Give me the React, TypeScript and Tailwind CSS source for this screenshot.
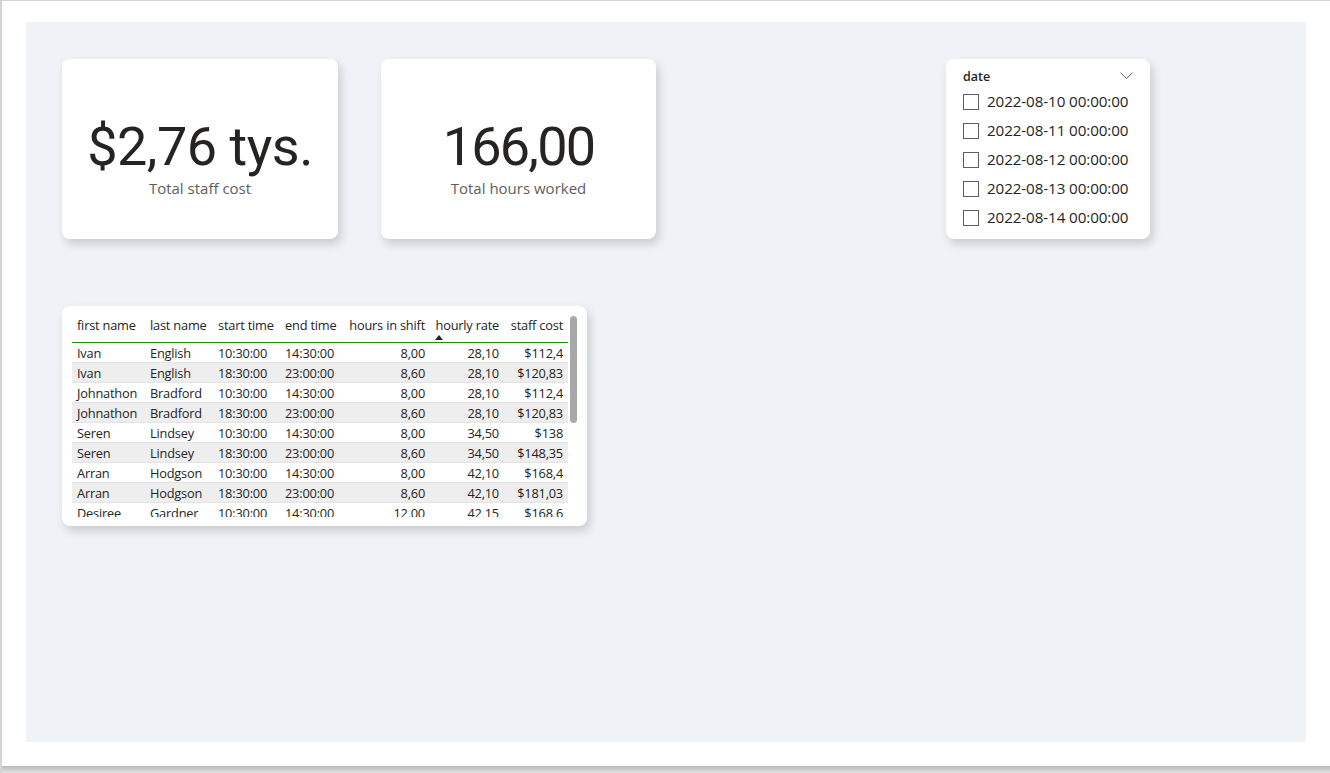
import React from "react";

const rows = [
  ["Ivan", "English", "10:30:00", "14:30:00", "8,00", "28,10", "$112,4"],
  ["Ivan", "English", "18:30:00", "23:00:00", "8,60", "28,10", "$120,83"],
  ["Johnathon", "Bradford", "10:30:00", "14:30:00", "8,00", "28,10", "$112,4"],
  ["Johnathon", "Bradford", "18:30:00", "23:00:00", "8,60", "28,10", "$120,83"],
  ["Seren", "Lindsey", "10:30:00", "14:30:00", "8,00", "34,50", "$138"],
  ["Seren", "Lindsey", "18:30:00", "23:00:00", "8,60", "34,50", "$148,35"],
  ["Arran", "Hodgson", "10:30:00", "14:30:00", "8,00", "42,10", "$168,4"],
  ["Arran", "Hodgson", "18:30:00", "23:00:00", "8,60", "42,10", "$181,03"],
  ["Desiree", "Gardner", "10:30:00", "14:30:00", "12,00", "42,15", "$168,6"],
];

const cols = [
  { name: "first name", w: "w-[73px]", right: false },
  { name: "last name", w: "w-[68px]", right: false },
  { name: "start time", w: "w-[67px]", right: false },
  { name: "end time", w: "w-[63px]", right: false },
  { name: "hours in shift", w: "w-[87px]", right: true },
  { name: "hourly rate", w: "w-[74px]", right: true },
  { name: "staff cost", w: "w-[64px]", right: true },
];

const dates = [
  "2022-08-10 00:00:00",
  "2022-08-11 00:00:00",
  "2022-08-12 00:00:00",
  "2022-08-13 00:00:00",
  "2022-08-14 00:00:00",
];

function Card({ value, label, w, tight }: { value: string; label: string; w: string; tight?: boolean }) {
  return (
    <div className={`${w} h-[180px] bg-white rounded-[8px] shadow-[3px_5px_10px_rgba(0,0,0,0.16)] flex flex-col items-center pt-[58px]`}>
      <div
        className={`text-[#252423] text-[54px] leading-[60px] ${tight ? "tracking-[-1.8px]" : "tracking-[-0.5px]"}`}
        style={{ fontFamily: "Roboto, sans-serif" }}
      >
        {value}
      </div>
      <div className="text-[#605E5C] text-[15px] leading-[20px] mt-[1px]">{label}</div>
    </div>
  );
}

export default function App() {
  return (
    <div
      className="w-[1330px] h-[773px] bg-[#d4d4d4] pl-[2px] pt-[1px] flex flex-col overflow-hidden"
      style={{ fontFamily: "'Open Sans', 'Noto Sans', sans-serif" }}
    >
      <div className="w-[1328px] h-[765px] bg-white pl-[24px] pt-[21px]">
        <div className="w-[1280px] h-[720px] bg-[#eff2f7] pl-[36px] pt-[37px]">
          <div className="flex">
            <Card w="w-[276px]" value="$2,76 tys." label="Total staff cost" />
            <div className="w-[43px]" />
            <Card w="w-[275px]" value="166,00" label="Total hours worked" tight />
            <div className="w-[290px]" />
            <div className="w-[204px] h-[180px] bg-white rounded-[8px] shadow-[3px_5px_10px_rgba(0,0,0,0.16)] pl-[17px] pr-[16px] pt-[9px]">
              <div className="flex items-center justify-between h-[18px]">
                <span className="text-[12.5px] font-semibold text-[#252423]">date</span>
                <svg width="13" height="8" viewBox="0 0 13 8" className="mr-[1px] mb-[2px]">
                  <path d="M0.5 0.8 L6.5 6.5 L12.5 0.8" fill="none" stroke="#605E5C" strokeWidth="1" />
                </svg>
              </div>
              <div className="flex flex-col mt-[1px]">
                {dates.map((d) => (
                  <div key={d} className="flex items-center h-[29px]">
                    <div className="w-[16px] h-[16px] border border-[#605E5C] bg-white" />
                    <span className="ml-[8px] text-[15.2px] text-[#252423] tracking-[-0.1px]">{d}</span>
                  </div>
                ))}
              </div>
            </div>
          </div>
          <div className="mt-[67px] w-[525px] h-[220px] bg-white rounded-[8px] shadow-[3px_5px_10px_rgba(0,0,0,0.16)] pl-[10px] pt-[10px] flex relative">
            <div className="h-[201px] overflow-hidden text-[12.8px] text-[#252423]">
              <div className="flex h-[27px] border-b border-[#1f8a0a]">
                {cols.map((c) => (
                  <div
                    key={c.name}
                    className={`${c.w} px-[5px] h-[26px] leading-[19px] whitespace-nowrap relative tracking-[-0.2px] ${c.right ? "text-right" : "text-left"}`}
                  >
                    {c.name}
                    {c.name === "hourly rate" && (
                      <svg width="8" height="5" viewBox="0 0 8 5" className="absolute left-[5px] top-[19px]">
                        <path d="M0 5 L4 0 L8 5 Z" fill="#252423" />
                      </svg>
                    )}
                  </div>
                ))}
              </div>
              {rows.map((r, i) => (
                <div
                  key={i}
                  className={`flex h-[20px] border-b border-[#e4e4e4] ${i % 2 === 1 ? "bg-[#eeeeee]" : "bg-white"}`}
                >
                  {r.map((v, j) => (
                    <div
                      key={j}
                      className={`${cols[j].w} px-[5px] leading-[20px] whitespace-nowrap tracking-[-0.2px] ${cols[j].right ? "text-right" : "text-left"}`}
                    >
                      {v}
                    </div>
                  ))}
                </div>
              ))}
            </div>
            <div className="ml-[2px] w-[7px] h-[107px] rounded-full bg-[#a8a8a8]" />
          </div>
        </div>
      </div>
      <div className="w-[1328px] h-[7px] bg-gradient-to-b from-[#b9b9b9] to-[#e2e2e2]" />
    </div>
  );
}
